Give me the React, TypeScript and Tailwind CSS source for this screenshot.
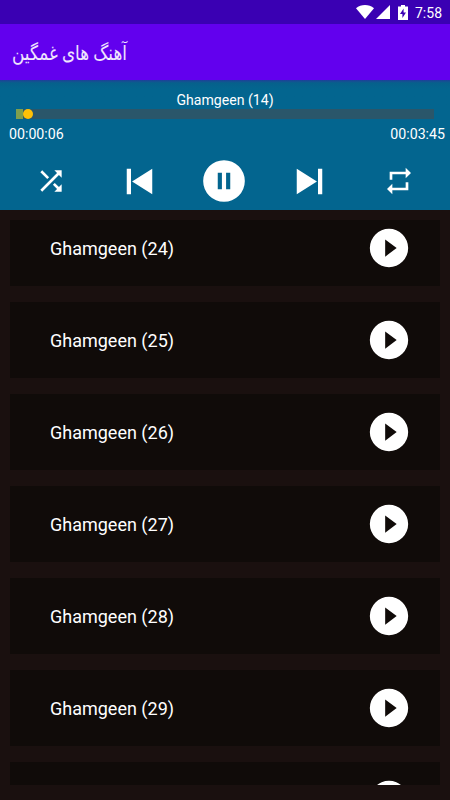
import React from 'react';

const songs = [24, 25, 26, 27, 28, 29];

function Icon({ d, className }: { d: string; className: string }) {
  return (
    <svg viewBox="0 0 24 24" fill="currentColor" className={`shrink-0 ${className}`}>
      <path d={d} />
    </svg>
  );
}

const paths = {
  shuffle:
    'M10.59 9.17L5.41 4 4 5.41l5.17 5.17 1.42-1.41zM14.5 4l2.04 2.04L4 18.59 5.41 20 17.96 7.46 20 9.5V4h-5.5zm.33 9.41l-1.41 1.41 3.13 3.13L14.5 20H20v-5.5l-2.04 2.04-3.13-3.13z',
  previous: 'M6 6h2v12H6zm2.5 6l9.5 6V6z',
  pause: 'M12 2a10 10 0 1 0 0 20 10 10 0 0 0 0-20zm-1 14H9V8h2v8zm4 0h-2V8h2v8z',
  next: 'M6 18l9.5-6L6 6v12zM16 6v12h2V6h-2z',
  repeat: 'M7 7h10v3l4-4-4-4v3H5v6h2V7zm10 10H7v-3l-4 4 4 4v-3h12v-6h-2v4z',
  play: 'M12 2a10 10 0 1 0 0 20 10 10 0 0 0 0-20zm-2 14.5v-9l6 4.5-6 4.5z',
};

function StatusBar() {
  return (
    <div className="flex h-6 items-center justify-end bg-[#3a00b3] pr-2 text-white">
      <svg viewBox="0 0 18 14" className="h-[14px] w-[18px]" fill="currentColor">
        <path d="M0 3.2C5-1 13-1 18 3.2L9 14z" />
      </svg>
      <svg viewBox="0 0 14 14" className="ml-[2px] h-[14px] w-[14px]" fill="currentColor">
        <path d="M14 0v14H0z" />
      </svg>
      <svg viewBox="0 0 10 15" className="ml-2 h-[15px] w-[10px]" fill="currentColor">
        <path fillRule="evenodd" d="M3 0h4v1.5h3V15H0V1.5h3zM5.6 3.5 2 9h2.4v4L8 7.5H5.6z" />
      </svg>
      <span className="ml-[7px] w-[27px] pt-px text-[14px] leading-6 whitespace-nowrap">7:58</span>
    </div>
  );
}

function Player() {
  return (
    <section className="h-[130px] bg-[#03658f] text-white">
      <div className="h-[29px] bg-linear-to-b from-[#1d3f9a] from-0% via-[#06608b] via-10% to-[#03658f] to-30% pt-[11px] text-center text-[14.1px] leading-[18px]">
        Ghamgeen (14)
      </div>
      <div className="mx-4 flex h-[10px] items-center bg-[#2a566a]">
        <div className="h-full w-[6.5px] bg-[#7e9f4e]" />
        <div className="h-[10px] w-[10px] rounded-full bg-[#ffc107]" />
      </div>
      <div className="flex justify-between pt-[6px] pr-[5px] pl-[9px] text-[14.2px] leading-[18px]">
        <span>00:00:06</span>
        <span>00:03:45</span>
      </div>
      <div className="flex h-[51px] items-center pt-[25px] pl-[34.5px]">
        <Icon d={paths.shuffle} className="size-8" />
        <Icon d={paths.previous} className="ml-[47.5px] size-[51px]" />
        <Icon d={paths.pause} className="ml-[34px] size-[50px]" />
        <Icon d={paths.next} className="ml-[35px] size-[51px]" />
        <Icon d={paths.repeat} className="ml-[47.5px] size-8" />
      </div>
    </section>
  );
}

function SongCard({ title }: { title?: string }) {
  return (
    <div className="flex h-[76px] shrink-0 items-center bg-[#100b09] pr-7 pl-10 text-white">
      {title && <span className="pt-[2px] text-[18px] leading-6">{title}</span>}
      <Icon d={paths.play} className="ml-auto size-[46px]" />
    </div>
  );
}

export default function App() {
  return (
    <div className="flex h-[800px] w-[450px] flex-col overflow-hidden bg-[#1a100f] font-[Roboto,'DejaVu_Sans',sans-serif]">
      <StatusBar />
      <header className="flex h-14 items-center bg-[#6200ee] pt-px pl-3 text-white">
        <h1
          dir="rtl"
          className="origin-left scale-x-[0.842] text-[20px] leading-6 whitespace-nowrap text-white/90"
        >
          آهنگ های غمگین
        </h1>
      </header>
      <Player />
      <main className="mx-[10px] mt-[10px] h-[565px] overflow-hidden">
        <div className="-mt-[10px] flex flex-col gap-4">
          {songs.map((n) => (
            <SongCard key={n} title={`Ghamgeen (${n})`} />
          ))}
          <SongCard />
        </div>
      </main>
    </div>
  );
}
